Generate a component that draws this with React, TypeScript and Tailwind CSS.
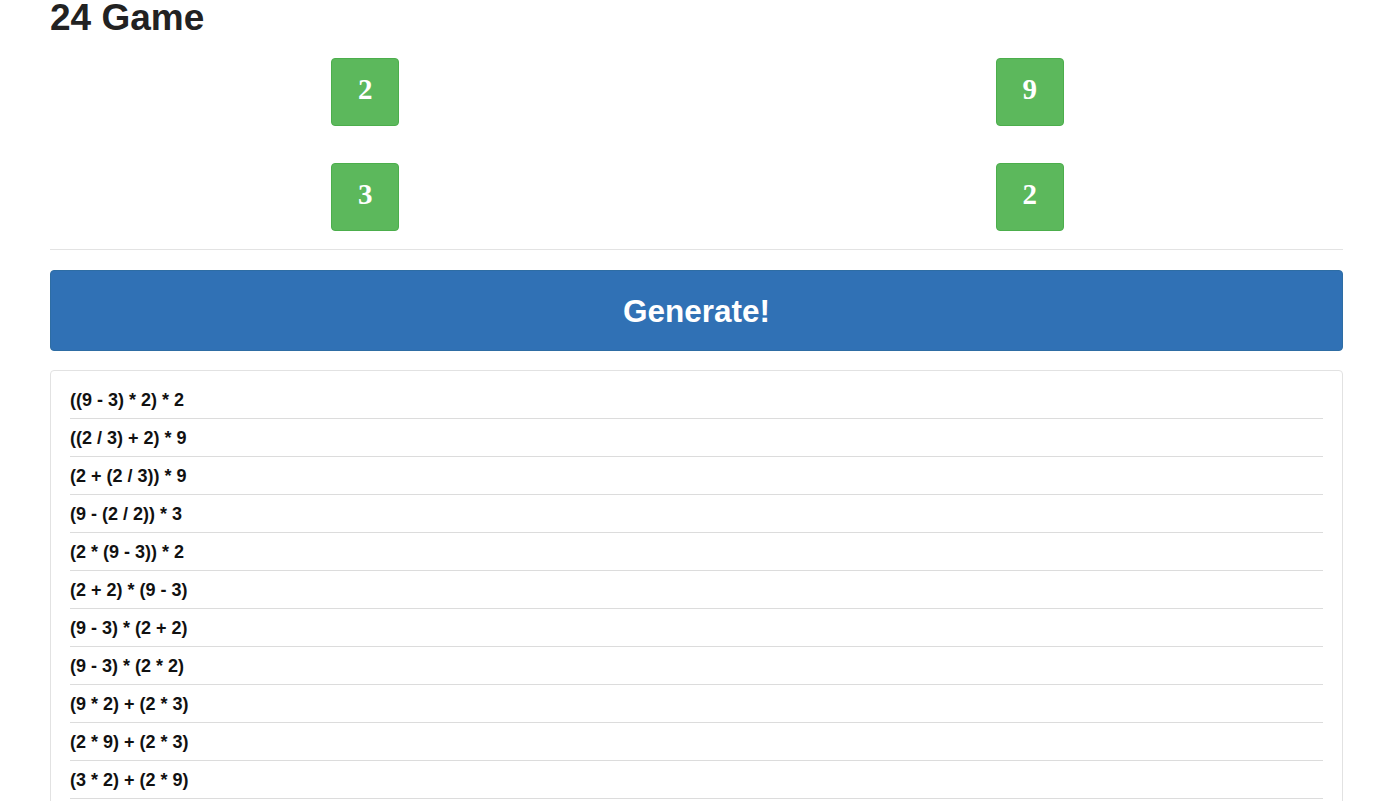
import React from 'react';

const numbers = [2, 9, 3, 2];

const solutions = [
  '((9 - 3) * 2) * 2',
  '((2 / 3) + 2) * 9',
  '(2 + (2 / 3)) * 9',
  '(9 - (2 / 2)) * 3',
  '(2 * (9 - 3)) * 2',
  '(2 + 2) * (9 - 3)',
  '(9 - 3) * (2 + 2)',
  '(9 - 3) * (2 * 2)',
  '(9 * 2) + (2 * 3)',
  '(2 * 9) + (2 * 3)',
  '(3 * 2) + (2 * 9)',
  '(2 * 3) + (9 * 2)',
  '(2 * 3) + (2 * 9)',
];

const Tile = ({ value }: { value: number }) => (
  <div className="w-[68px] h-[68px] rounded-[4px] bg-[#5cb85c] border border-[#4cae4c] flex items-center justify-center text-white font-bold text-[29px] font-['Liberation_Serif',serif] pb-[4px]">
    {value}
  </div>
);

export default function App() {
  return (
    <div className="min-h-screen bg-white text-[#222] font-['Liberation_Sans',Arial,sans-serif]">
      <div className="mx-[50px] max-w-[1293px]">
        <h1 className="m-0 text-[37px] leading-[36px] font-bold text-[#222]">24 Game</h1>

        <div className="-ml-[17px] -mr-[19px] mt-[22px] grid grid-cols-2 gap-y-[37px]">
          {numbers.map((n, i) => (
            <div key={i} className="flex justify-center">
              <Tile value={n} />
            </div>
          ))}
        </div>

        <hr className="mt-[18px] border-0 border-t border-[#e3e3e3]" />

        <button className="mt-[20px] w-full h-[81px] rounded-[4px] bg-[#3071b5] border border-[#2e6da4] text-white text-[31.5px] font-bold pt-[2px]">
          Generate!
        </button>

        <div className="mt-[19px] border border-[#e2e2e2] rounded-[4px] pt-[10px] px-[19px] pb-[10px]">
          <ul>
            {solutions.map((s, i) => (
              <li
                key={i}
                className="pt-[7px] pb-[5px] leading-[25px] text-[18px] font-bold text-[#111] border-b border-[#dcdcdc]"
              >
                {s}
              </li>
            ))}
          </ul>
        </div>
      </div>
    </div>
  );
}
